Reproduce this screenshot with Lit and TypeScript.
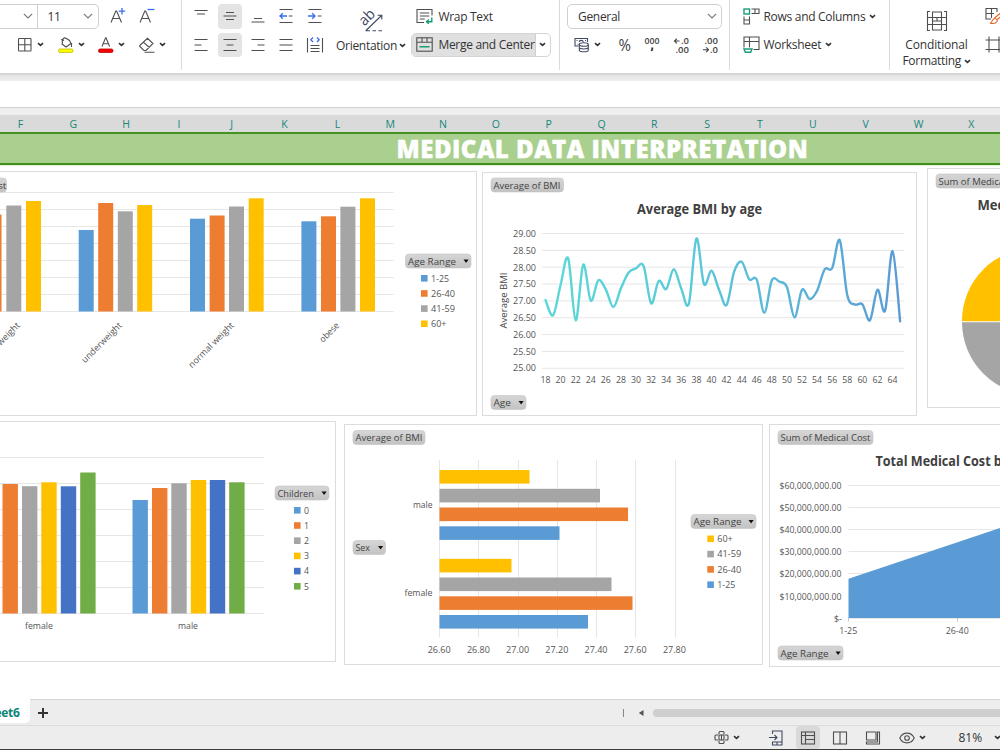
import { html, svg, css, LitElement } from 'lit'
import { customElement } from 'lit/decorators.js'

const BLUE = '#5b9bd5'
const ORANGE = '#ed7d31'
const GRAY = '#a5a5a5'
const YELLOW = '#ffc000'
const NAVY = '#4472c4'
const GREEN = '#70ad47'

const COLUMNS = 'FGHIJKLMNOPQRSTUVWX'.split('')

const icon = (w: number, h: number, body: unknown) =>
  html`<svg class="icon" width=${w} height=${h} viewBox="0 0 ${w} ${h}">${body}</svg>`

const chevron = () => icon(7, 5, svg`<path class="bold" d="M1 1.2l2.5 2.2L6 1.2" />`)
const wideChevron = () => icon(10, 6, svg`<path class="soft" d="M.8 .8L5 5 9.200 .8" />`)

// chart primitives

const label = (x: number, y: number, text: string, width = 0, anchor = 'start', cls = 'small') =>
  width
    ? svg`<text class=${cls} x=${x} y=${y} text-anchor=${anchor} textLength=${width} lengthAdjust="spacingAndGlyphs">${text}</text>`
    : svg`<text class=${cls} x=${x} y=${y} text-anchor=${anchor}>${text}</text>`

const pivot = (x: number, y: number, w: number, text: string, textWidth: number, arrow = false) => svg`
  <rect x=${x} y=${y} width=${w} height="14" rx="3.500" fill="url(#pivot)" stroke="#c2c2c2" stroke-width=".6" />
  ${label(x + 2.5, y + 10.6, text, textWidth, 'start', 'field')}
  ${arrow ? svg`<path fill="#111" d="M${x + w - 7.5} ${y + 5.6}h5.200l-2.600 3.400z" />` : ''}
`

const hLines = (x1: number, x2: number, ys: number[]) =>
  ys.map((y) => svg`<line class="grid" x1=${x1} x2=${x2} y1=${y} y2=${y} />`)

const vLines = (y1: number, y2: number, xs: number[]) =>
  xs.map((x) => svg`<line class="grid" x1=${x} x2=${x} y1=${y1} y2=${y2} />`)

const legend = (x: number, y: number, step: number, items: [string, string, number][]) =>
  items.map(
    ([color, text, width], i) => svg`
      <rect x=${x} y=${y + i * step - 3.3} width="6.600" height="6.600" fill=${color} />
      ${label(x + 10, y + i * step + 3.3, text, width)}
    `
  )

const columns = (base: number, width: number, items: [number, number, string][]) =>
  items.map(([x, top, color]) => svg`<rect x=${x} y=${top} width=${width} height=${base - top} fill=${color} />`)

const smoothPath = (pts: number[][]) => {
  let d = `M${pts[0][0]} ${pts[0][1]}`
  for (let i = 0; i < pts.length - 1; i++) {
    const a = pts[i - 1] || pts[i]
    const b = pts[i]
    const c = pts[i + 1]
    const e = pts[i + 2] || c
    d += `C${b[0] + (c[0] - a[0]) / 6} ${b[1] + (c[1] - a[1]) / 6} ${c[0] - (e[0] - b[0]) / 6} ${c[1] - (e[1] - b[1]) / 6} ${c[0]} ${c[1]}`
  }
  return d
}

const bmiByAge = [
  300, 315.3, 285, 258.3, 320.3, 264.7, 300.7, 280.3, 289.7, 307, 288.3, 272.7, 268.3, 266, 303.3, 281, 289, 269.3,
  288.7, 303.7, 238.5, 284, 270.7, 289.7, 305, 271.7, 261.7, 279.3, 279.8, 312.7, 280.3, 281.7, 287, 317.3, 289.7, 299,
  290.7, 269.3, 268, 240.2, 295.3, 304.5, 304.3, 320.3, 289.7, 310.7, 251.3, 321.3,
]

const ageX = (age: number) => 545.5 + (age - 18) * 7.545

@customElement('pivot-chart')
export class PivotChart extends LitElement {
  static properties = { box: { attribute: false }, body: { attribute: false } }

  declare box: number[]
  declare body: unknown

  render() {
    const [x, y, w, h] = this.box
    return html`
      <svg width=${w} height=${h} viewBox="${x} ${y} ${w} ${h}">
        <defs>
          <linearGradient id="pivot" x1="0" y1="0" x2="0" y2="1">
            <stop offset="0" stop-color="#d6d6d6" />
            <stop offset="1" stop-color="#c3c3c3" />
          </linearGradient>
          <linearGradient id="line" gradientUnits="userSpaceOnUse" x1="545" y1="0" x2="900" y2="0">
            <stop offset="0" stop-color="#5ad8d6" />
            <stop offset=".4" stop-color="#5acbd8" />
            <stop offset="1" stop-color="#5b9bd5" />
          </linearGradient>
        </defs>
        <rect x=${x + 0.5} y=${y + 0.5} width=${w - 1} height=${h - 1} fill="#fff" stroke="#dcdcdc" />
        ${this.body}
      </svg>
    `
  }

  static styles = css`
    :host {
      display: block;
      flex: none;
      letter-spacing: 0;
    }

    svg {
      display: block;
      font-family: 'Open Sans', 'Noto Sans', sans-serif;
    }

    .small {
      font-size: 9px;
      fill: #555;
    }

    .field {
      font-size: 9.8px;
      fill: #444;
    }

    .title {
      font-size: 13.3px;
      font-weight: 700;
      fill: #404040;
    }

    .grid {
      stroke: #e6e6e6;
      stroke-width: 1;
    }
  `
}

@customElement('app-root')
export class App extends LitElement {
  private ranges: [string, string, number][] = [
    [BLUE, '1-25', 18],
    [ORANGE, '26-40', 24],
    [GRAY, '41-59', 24],
    [YELLOW, '60+', 15.5],
  ]

  private renderWeightChart() {
    const slanted = (x: number, text: string, width: number) =>
      svg`<g transform="translate(${x} 326) rotate(-45)">${label(0, 0, text, width, 'end')}</g>`
    return svg`
      ${hLines(-5, 393.5, [192.5, 209.5, 226.5, 243.5, 260.5, 277.5, 294.5, 311.5])}
      ${columns(311.5, 15, [
        [-13.5, 214.5, ORANGE],
        [6.3, 205.5, GRAY],
        [26, 201, YELLOW],
        [78.7, 230, BLUE],
        [98.2, 203, ORANGE],
        [117.8, 211.3, GRAY],
        [137.2, 205, YELLOW],
        [190, 218.7, BLUE],
        [209.6, 215.5, ORANGE],
        [229, 206.5, GRAY],
        [248.7, 198.3, YELLOW],
        [301.4, 221.3, BLUE],
        [321, 216.3, ORANGE],
        [340.4, 206.7, GRAY],
        [360, 198.3, YELLOW],
      ])}
      ${slanted(20.5, 'overweight', 47)}
      ${slanted(122.5, 'underweight', 53)}
      ${slanted(234.5, 'normal weight', 60)}
      ${slanted(340, 'obese', 24)}
      ${pivot(-70, 178, 76.5, 'Average of Cost', 74)}
      ${pivot(405.5, 254, 65.5, 'Age Range', 48, true)}
      ${legend(421, 278.3, 15.15, this.ranges)}
    `
  }

  private renderLineChart() {
    const ticks = ['29.00', '28.50', '28.00', '27.50', '27.00', '26.50', '26.00', '25.50', '25.00']
    const ages = Array.from({ length: 24 }, (_, i) => 18 + i * 2)
    return svg`
      ${pivot(491, 178, 72.5, 'Average of BMI', 67)}
      ${label(699.5, 214, 'Average BMI by age', 125, 'middle', 'title')}
      ${hLines(542, 904, ticks.map((_, i) => 233.5 + i * 16.85))}
      ${ticks.map((t, i) => label(536, 237 + i * 16.8, t, 23, 'end'))}
      ${ages.map((a) => label(ageX(a), 383.3, String(a), 10, 'middle'))}
      <g transform="translate(507 328.500) rotate(-90)">${label(0, 0, 'Average BMI', 56, 'start', 'field')}</g>
      <path d=${smoothPath(bmiByAge.map((y, i) => [ageX(18 + i), y]))} fill="none" stroke="url(#line)"
        stroke-width="2.400" stroke-linecap="round" stroke-linejoin="round" />
      ${pivot(491, 395.5, 35, 'Age', 17.5, true)}
    `
  }

  private renderPieChart() {
    return svg`
      ${pivot(936, 174, 95, 'Sum of Medical Cost', 90)}
      ${label(977.5, 209.5, 'Medical Cost by Region', 150, 'start', 'title')}
      <path fill=${YELLOW} d="M1035 321.300H962A73 73 0 0 1 1035 248z" />
      <path fill=${GRAY} d="M1035 322.300H962A73 73 0 0 0 1035 395z" />
    `
  }

  private renderChildrenChart() {
    return svg`
      ${hLines(-5, 264, [457.5, 483.5, 509.5, 535.5, 561.5, 587.5, 613.5])}
      ${columns(613.5, 15.4, [
        [2.5, 484, ORANGE],
        [22, 486.2, GRAY],
        [41.3, 482.3, YELLOW],
        [60.8, 486.3, NAVY],
        [80.2, 472.5, GREEN],
        [132.5, 500, BLUE],
        [152, 488, ORANGE],
        [171.3, 483.3, GRAY],
        [190.8, 480, YELLOW],
        [209.8, 480, NAVY],
        [229.2, 482.3, GREEN],
      ])}
      ${label(39, 628.8, 'female', 28, 'middle')}
      ${label(188, 628.8, 'male', 20, 'middle')}
      ${pivot(275, 486, 54, 'Children', 36.5, true)}
      ${legend(294, 510.3, 15.2, [
        [BLUE, '0', 5],
        [ORANGE, '1', 5],
        [GRAY, '2', 5],
        [YELLOW, '3', 5],
        [NAVY, '4', 5],
        [GREEN, '5', 5],
      ])}
    `
  }

  private renderSexChart() {
    const ticks = ['26.60', '26.80', '27.00', '27.20', '27.40', '27.60', '27.80']
    const bars: [number, number, string][] = [
      [470, 529.5, YELLOW],
      [488.8, 600, GRAY],
      [507.5, 628, ORANGE],
      [526.3, 559.5, BLUE],
      [558.8, 511.5, YELLOW],
      [577.5, 611.5, GRAY],
      [596.3, 632.5, ORANGE],
      [615, 588, BLUE],
    ]
    return svg`
      ${vLines(460, 637.5, [439.5, 478.5, 518.5, 557.5, 596.5, 635.5, 675.5])}
      ${bars.map(([y, end, color]) => svg`<rect x="439.500" y=${y} width=${end - 439.5} height="13.600" fill=${color} />`)}
      ${label(432.5, 507.5, 'male', 19.5, 'end')}
      ${label(432.5, 596.3, 'female', 28, 'end')}
      ${ticks.map((t, i) => label(439.2 + i * 39.2, 653.3, t, 23, 'middle'))}
      ${pivot(353, 430.5, 72, 'Average of BMI', 67)}
      ${pivot(353, 540.5, 32.5, 'Sex', 14.5, true)}
      ${pivot(691, 514.5, 65, 'Age Range', 48, true)}
      ${legend(707.3, 538.8, 15.3, [...this.ranges].reverse())}
    `
  }

  private renderAreaChart() {
    const ticks = ['$60,000,000.00', '$50,000,000.00', '$40,000,000.00', '$30,000,000.00', '$20,000,000.00', '$10,000,000.00']
    return svg`
      ${pivot(778, 430.5, 95, 'Sum of Medical Cost', 90)}
      ${label(875.5, 466, 'Total Medical Cost by Age', 160, 'start', 'title')}
      ${hLines(848.5, 1005, [485.5, 507.5, 529.5, 551.5, 573.5, 595.5, 618.5])}
      ${ticks.map((t, i) => label(841.5, 489 + i * 22.1, t, 62, 'end'))}
      ${label(842, 621.5, '$-', 8, 'end')}
      <path fill=${BLUE} d="M848.500 578.700L1003 527V618H848.500z" />
      ${[848.5, 957.5].map((x) => svg`<line x1=${x} x2=${x} y1="618" y2="621.500" stroke="#c8c8c8" />`)}
      ${label(848.2, 633.5, '1-25', 18, 'middle')}
      ${label(957.2, 633.5, '26-40', 23, 'middle')}
      ${pivot(778, 646, 65, 'Age Range', 48, true)}
    `
  }

  private renderFontGroup() {
    return html`
      <section class="group font-group">
        <div class="row">
          <div class="family">${wideChevron()}</div>
          <div class="size"><span>11</span>${wideChevron()}</div>
          <span class="slot first-slot">
            ${icon(18, 18, svg`<path d="M2 15.500L6.800 4h.8L12.500 15.500M3.800 11.500h7" /><path class="blue" d="M13 1v6.500M9.800 4.200h6.400" />`)}
          </span>
          <span class="slot">
            ${icon(18, 18, svg`<path d="M2 15.500L6.800 4h.8L12.500 15.500M3.800 11.500h7" /><path class="blue" d="M9.500 2.500h6.800" />`)}
          </span>
        </div>
        <div class="row tools">
          <span class="tool">
            ${icon(16, 16, svg`<rect x="1.500" y="1.500" width="12.500" height="12.500" rx=".8" /><path d="M7.800 1.500v12.500M1.500 7.800h12.500" />`)} ${chevron()}
          </span>
          <span class="tool">
            ${icon(
              16,
              16,
              svg`<path d="M4.500 5.500C3.500 3 6 0 8 1.200L11.500 3.500 13 6.500 8 10 4 7zM3 2.500l3 1M13.500 6v4" />
                <rect x=".5" y="12" width="14.500" height="3.400" rx="1.500" fill="#ff0" stroke="#b9b900" stroke-width=".8" />`
            )}
            ${chevron()}
          </span>
          <span class="tool">
            ${icon(
              16,
              16,
              svg`<path d="M4 9.500L7.600 .8h.4L11.600 9.500M5.300 6.800h5" />
                <rect x=".5" y="12" width="14.500" height="3.400" rx="1.500" fill="#f00" stroke="#b00000" stroke-width=".8" />`
            )}
            ${chevron()}
          </span>
          <span class="tool">
            ${icon(16, 16, svg`<path d="M.8 8.500L8.500 1.300 14 6.500 7 13.500H5L.8 9.500zM4.500 5.300l6 5.200M5.500 15.200h10" />`)} ${chevron()}
          </span>
        </div>
      </section>
    `
  }

  private renderAlignGroup() {
    return html`
      <section class="group align-group">
        <div class="stack">
          <div class="row slots">
            <span class="slot">${icon(16, 16, svg`<path d="M1.500 2.500h13M4 6h8" />`)}</span>
            <span class="slot on">${icon(16, 16, svg`<path d="M4 4.500h8M1.500 8h13M4 11.500h8" />`)}</span>
            <span class="slot">${icon(16, 16, svg`<path d="M4 10.500h8M1.500 14h13" />`)}</span>
            <span class="slot">
              ${icon(16, 16, svg`<path d="M1.500 1.500h13M10.800 8h3.700M1.500 14.500h13" /><path class="blue" d="M9 8H2M4.800 5.200L2 8l2.800 2.800" />`)}
            </span>
            <span class="slot">
              ${icon(16, 16, svg`<path d="M1.500 1.500h13M10.800 8h3.700M1.500 14.500h13" /><path class="blue" d="M1 8h7M5.200 5.200L8 8l-2.800 2.800" />`)}
            </span>
          </div>
          <div class="row slots">
            <span class="slot">${icon(16, 16, svg`<path d="M1.500 2.500h13M1.500 8h7M1.500 13.500h13" />`)}</span>
            <span class="slot on">${icon(16, 16, svg`<path d="M1.500 2.500h13M4.500 8h7M1.500 13.500h13" />`)}</span>
            <span class="slot">${icon(16, 16, svg`<path d="M1.500 2.500h13M7.500 8h7M1.500 13.500h13" />`)}</span>
            <span class="slot">${icon(16, 16, svg`<path d="M1.500 2.500h13M1.500 8h13M1.500 13.500h13" />`)}</span>
            <span class="slot">
              ${icon(
                18,
                18,
                svg`<path d="M1.500 2v14.500M16.500 2v14.500M4.500 9.500h9M4.500 12.500h9M4.500 15.500h9" />
                  <path class="blue" d="M7 1.500L4.800 3.800 7 6M11 1.500L13.200 3.800 11 6" />`
              )}
            </span>
          </div>
        </div>
        <div class="orientation">
          ${icon(
            32,
            24,
            svg`<g transform="translate(9.500 18.500) rotate(-45)"><text class="glyph ab" textLength="16.500" lengthAdjust="spacingAndGlyphs">ab</text></g>
              <path class="ink" d="M11 22.500L26.500 7.500M22.500 7.200H26.800V11.500M10.500 22.800h4.500M17.500 22.800h3.500M23.500 22.800h3.500" />`
          )}
          <span class="caption">Orientation ${chevron()}</span>
        </div>
        <div class="stack wrap-stack">
          <div class="row wrap">
            ${icon(
              17,
              16,
              svg`<path d="M8 14.500H1V1.500h15v6M3.800 5h9.500M3.800 8h9.500M3.800 11h5" />
                <path class="teal" d="M15.800 9.500v4.300H10.800M12.800 11.500L10.500 13.800l2.300 2" />`
            )}
            <span>Wrap Text</span>
          </div>
          <div class="merge">
            <span class="merge-main">
              ${icon(
                17,
                15,
                svg`<rect x=".800" y=".8" width="15.400" height="13.400" /><path d="M.8 5.300h15.400M6 .800v4.500M11 .800v4.500" /><path class="teal" d="M3.500 9.800h10" />`
              )}
              <span>Merge and Center</span>
            </span>
            <span class="merge-more">${chevron()}</span>
          </div>
        </div>
      </section>
    `
  }

  private renderNumberGroup() {
    return html`
      <section class="group number-group">
        <div class="format"><span>General</span>${wideChevron()}</div>
        <div class="row number-row">
          <span class="money">
            ${icon(
              16,
              16,
              svg`<path class="ink" d="M4.500 9H1V1.500h12.500V5M2.500 3.500h1M11 3.500h1M3.500 7.300h1" /><path class="ink" d="M5.200 5a2 1.600 0 0 1 4 0" />
                <ellipse class="ink" cx="9.800" cy="7.500" rx="4.500" ry="1.800" />
                <path class="ink" d="M5.300 7.500v5.500c0 2.400 9 2.400 9 0V7.500M5.300 10.300c0 2.200 9 2.200 9 0" />`
            )}
            ${chevron()}
          </span>
          ${icon(14, 18, svg`<text class="glyph percent" x=".5" y="15" textLength="12.500" lengthAdjust="spacingAndGlyphs">%</text>`)}
          ${icon(
            16,
            18,
            svg`<text class="glyph" x=".5" y="8" textLength="15" lengthAdjust="spacingAndGlyphs">000</text><path class="comma" d="M8.300 11.500v1.500l-.8 2" />`
          )}
          ${icon(
            17,
            18,
            svg`<path class="arrow" d="M6.500 5H1.500M3.800 2.700L1.500 5l2.300 2.300" />
              <text class="glyph" x="8" y="8" textLength="8" lengthAdjust="spacingAndGlyphs">.0</text>
              <text class="glyph" x="2.500" y="16.700" textLength="13.500" lengthAdjust="spacingAndGlyphs">.00</text>`
          )}
          ${icon(
            17,
            18,
            svg`<text class="glyph" x="2.500" y="8" textLength="13.500" lengthAdjust="spacingAndGlyphs">.00</text>
              <path class="arrow" d="M1 13.700h5.500M4.200 11.400l2.300 2.300-2.300 2.300" />
              <text class="glyph" x="8" y="16.700" textLength="8" lengthAdjust="spacingAndGlyphs">.0</text>`
          )}
        </div>
      </section>
    `
  }

  private renderCellsGroup() {
    return html`
      <section class="group cells-group">
        <div class="row entry">
          ${icon(
            17,
            17,
            svg`<path d="M8.500 1h7.500v4.500H8.500M12 1v4.500M1 8.500V16h5.500V8.500M1 12h5.500" /><rect class="teal" x="1" y="1" width="5.500" height="5" />`
          )}
          <span>Rows and Columns</span>${chevron()}
        </div>
        <div class="row entry sheet-entry">
          ${icon(
            17,
            17,
            svg`<path d="M1 11.500V1h15v12.500H10.500M1 5.500h15M6.500 1v10.500" /><path class="teal" d="M1 13h8l-1.300 3.200H2.300z" />`
          )}
          <span>Worksheet</span>${chevron()}
        </div>
      </section>
    `
  }

  private renderStyleGroup() {
    return html`
      <section class="group style-group">
        <div class="conditional">
          ${icon(
            22,
            22,
            svg`<path d="M4 1.500H1.500v19H4M18 1.500h2.500v19H18M1.500 7.500h19M1.500 14.500h19M6.500 2h9v5.500h-9zM6.500 11h9M11 7.500v3.500M6.500 14.500h9V20h-9zM6.500 7.500v7M15.500 7.500v7" />`
          )}
          <span>Conditional</span>
          <span class="caption">Formatting ${chevron()}</span>
        </div>
        <div class="clipped">
          ${icon(
            18,
            18,
            svg`<path d="M6 12H1V1.500h11V5M1 6.500h8M6.500 1.500V11" /><path class="orange" d="M18 4L9.500 11M5 16.200c3-.5 1.500-4 4.500-4.700 2.500 0 3.500 2 2 3.700-1.600 1.600-4.300 1.500-6.500 1zM18 7.500l-5.500 5" />`
          )}
          ${icon(18, 18, svg`<path d="M4 .5v16M14 .5v16M.5 4H18M.5 13.500H18" />`)}
        </div>
      </section>
    `
  }

  private chart(box: number[], body: unknown, cls: string) {
    return html`<pivot-chart class=${cls} .box=${box} .body=${body}></pivot-chart>`
  }

  render() {
    return html`
      <header class="ribbon">
        ${this.renderFontGroup()} ${this.renderAlignGroup()} ${this.renderNumberGroup()} ${this.renderCellsGroup()}
        ${this.renderStyleGroup()}
      </header>
      <div class="shade"></div>
      <div class="formula"></div>
      <div class="gap"></div>
      <div class="letters">${COLUMNS.map((c) => html`<span>${c}</span>`)}</div>
      <h1 class="banner"><span>MEDICAL DATA INTERPRETATION</span></h1>
      <main class="sheet">
        <div class="charts">
          ${this.chart([-10, 171, 487, 245], this.renderWeightChart(), 'weight')}
          ${this.chart([482, 172, 435, 244], this.renderLineChart(), 'line')}
          ${this.chart([927, 168, 150, 240], this.renderPieChart(), 'pie')}
        </div>
        <div class="charts lower">
          ${this.chart([-10, 421, 346, 241], this.renderChildrenChart(), 'children')}
          ${this.chart([344, 424, 419, 241], this.renderSexChart(), 'sex')}
          ${this.chart([769, 424, 300, 243], this.renderAreaChart(), 'area')}
        </div>
      </main>
      <nav class="tabs">
        <span class="tab">Sheet6</span>
        ${icon(12, 12, svg`<path class="plus" d="M6 1v10M1 6h10" />`)}
        <span class="spacer"></span>
        <span class="split"></span>
        ${icon(6, 8, svg`<path d="M5.500 1v6L.8 4z" fill="#555" stroke="none" />`)}
        <span class="thumb"></span>
      </nav>
      <footer class="status">
        <span class="view move">
          ${icon(
            15,
            15,
            svg`<path d="M5 4V2.500Q5 1.500 6 1.500h3q1 0 1 1V4M5 11v1.500q0 1 1 1h3q1 0 1-1V11M4 5H2Q1 5 1 6v3q0 1 1 1h2M11 5h2q1 0 1 1v3q0 1-1 1h-2" /><rect x="5" y="5" width="5" height="5" /><path d="M7.500 5v5" />`
          )}
          ${chevron()}
        </span>
        <span class="divider"></span>
        <span class="view jump">
          ${icon(16, 16, svg`<path class="ink" d="M4.500 4V1h9.500v14H4.500v-3.500M1 7.500h8M6.500 5L9 7.500 6.500 10M4.500 12H14M9 12v3" />`)}
        </span>
        <span class="view active">${icon(16, 16, svg`<rect x="1.500" y="2" width="13" height="12" /><path d="M1.500 5.500h13M5.500 2v12M5.500 9.500h9" />`)}</span>
        <span class="view">${icon(16, 16, svg`<rect x="1.500" y="2" width="13" height="12" /><path d="M8 2v12" />`)}</span>
        <span class="view">${icon(16, 16, svg`<path d="M1.500 2h9.500v8H1.500zM12.500 2h2v12H1.500v-2h11z" />`)}</span>
        <span class="view eye">
          ${icon(16, 14, svg`<path d="M.8 7c3-6.500 11.400-6.500 14.400 0-3 6.500-11.400 6.500-14.400 0z" /><circle cx="8" cy="7" r="2.300" />`)} ${chevron()}
        </span>
        <span class="divider"></span>
        <span class="zoom">81%</span>
        ${chevron()}
      </footer>
    `
  }

  static styles = css`
    :host {
      display: flex;
      flex-direction: column;
      width: 1000px;
      height: 750px;
      overflow: hidden;
      background: #fff;
      color: #333;
      font-family: 'Open Sans', 'Noto Sans', sans-serif;
      font-size: 12px;
      letter-spacing: -0.3px;
    }

    * {
      box-sizing: border-box;
    }

    :host > * {
      flex: none;
    }

    span {
      white-space: nowrap;
    }

    .icon {
      display: block;
      flex: none;
      fill: none;
      stroke: #4f4f4f;
      stroke-width: 1.1;
    }

    .icon .bold {
      stroke: #333;
      stroke-width: 1.6;
    }

    .icon .soft {
      stroke: #777;
    }

    .icon .blue {
      stroke: #3a6cf0;
      stroke-width: 1.3;
    }

    .icon .teal {
      stroke: #1a9c77;
      stroke-width: 1.4;
    }

    .icon .orange {
      stroke: #e0662c;
    }

    .icon .ink {
      stroke: #414a63;
    }

    .icon .arrow {
      stroke: #444;
    }

    .icon .comma {
      stroke: #333;
      stroke-width: 1.8;
    }

    .icon .plus {
      stroke: #333;
      stroke-width: 2;
    }

    .glyph {
      fill: #444;
      stroke: none;
      font-size: 8.4px;
      font-weight: 600;
      letter-spacing: 0;
    }

    .percent {
      font-size: 16px;
      font-weight: 400;
    }

    .ab {
      fill: #414a63;
      font-size: 15px;
      font-weight: 400;
    }

    .ribbon {
      display: flex;
      height: 73px;
      background: #fff;
    }

    .group {
      display: flex;
      flex: none;
      height: 70px;
      padding-top: 4px;
      border-right: 1px solid #dadada;
    }

    .row {
      display: flex;
      align-items: center;
      height: 24.5px;
    }

    .stack,
    .font-group,
    .number-group,
    .cells-group {
      display: flex;
      flex-direction: column;
      gap: 4px;
    }

    .slot {
      display: flex;
      align-items: center;
      justify-content: center;
      width: 24px;
      height: 24.5px;
      border-radius: 4px;
    }

    .on {
      background: #e4e4e4;
    }

    .slots {
      gap: 4.4px;
    }

    .font-group {
      width: 182px;
    }

    .font-group .row:first-child {
      gap: 4.5px;
    }

    .family,
    .size {
      display: flex;
      align-items: center;
      height: 24.5px;
      border: 1px solid #cfcfcf;
      border-left: none;
    }

    .family {
      width: 38px;
      padding-left: 22.5px;
    }

    .size {
      justify-content: space-between;
      width: 61px;
      margin-left: -4.5px;
      padding: 0 5px 0 9.5px;
      border-radius: 0 5px 5px 0;
    }

    .first-slot {
      margin-left: 2.5px;
    }

    .tools {
      padding-left: 17px;
    }

    .tool {
      display: flex;
      align-items: center;
      gap: 4px;
      width: 40.7px;
    }

    .align-group {
      width: 378px;
      padding-left: 7.2px;
    }

    .orientation {
      display: flex;
      flex-direction: column;
      align-items: center;
      width: 71px;
      margin-left: 9px;
      padding-top: 4px;
      gap: 5px;
    }

    .caption {
      display: flex;
      align-items: center;
      gap: 2.5px;
    }

    .wrap-stack {
      margin-left: 4.2px;
    }

    .wrap {
      gap: 5px;
      padding-left: 5.5px;
    }

    .merge {
      display: flex;
      height: 24.5px;
      width: 140px;
      border: 1px solid #d4d4d4;
      border-radius: 5px;
      overflow: hidden;
    }

    .merge-main {
      display: flex;
      align-items: center;
      gap: 5px;
      width: 124px;
      padding-left: 4.5px;
      background: #e0e0e0;
      border-right: 1px solid #d0d0d0;
    }

    .merge-more {
      display: flex;
      align-items: center;
      padding-left: 3px;
    }

    .number-group {
      width: 170px;
      padding-left: 7px;
    }

    .format {
      display: flex;
      align-items: center;
      justify-content: space-between;
      width: 155px;
      height: 24.5px;
      padding: 0 4px 0 10px;
      border: 1px solid #cfcfcf;
      border-radius: 5px;
    }

    .number-row {
      gap: 12.5px;
      padding-left: 7px;
    }

    .money {
      display: flex;
      align-items: center;
      gap: 3.5px;
      width: 31px;
    }

    .cells-group {
      width: 160px;
      padding-left: 12.5px;
    }

    .entry {
      gap: 4px;
    }

    .style-group {
      flex: 1;
      border-right: none;
      padding-left: 13.5px;
      overflow: hidden;
    }

    .conditional {
      display: flex;
      flex-direction: column;
      align-items: center;
      width: 66px;
      padding-top: 6px;
      line-height: 16px;
      flex: none;
    }

    .conditional > .icon {
      margin-bottom: 5px;
    }

    .conditional > span:first-of-type {
      letter-spacing: -0.15px;
    }

    .clipped {
      display: flex;
      flex-direction: column;
      gap: 11px;
      padding: 3px 0 0 15px;
    }

    .shade {
      height: 8px;
      background: linear-gradient(#cfcfcf, #e6e6e6 40%, #efefef);
    }

    .formula {
      height: 27px;
      background: #fff;
      border-bottom: 1px solid #d0d0d0;
    }

    .gap {
      height: 7px;
      background: #efefef;
    }

    .letters {
      display: flex;
      height: 17px;
      margin-left: -12px;
      background: #dadada;
      border-left: 6px solid #dadada;
    }

    .letters span {
      flex: none;
      width: calc(951px / 18);
      color: #14877a;
      font-size: 10.5px;
      letter-spacing: 0;
      line-height: 18px;
      text-align: center;
    }

    .banner {
      display: flex;
      align-items: center;
      height: 33px;
      margin: 0;
      padding-left: 396.5px;
      background: #a9d08e;
      border-top: 2px solid #459122;
      border-bottom: 2px solid #3f8f1a;
      color: #fff;
      font-size: 24px;
      font-weight: 800;
      letter-spacing: 0.5px;
      line-height: 29px;
      -webkit-text-stroke: 0.4px #fff;
    }

    .sheet {
      height: 534px;
      border-top: 1px solid #e3f0d9;
    }

    .charts {
      display: flex;
      align-items: flex-start;
      height: 252px;
      margin-left: -10px;
    }

    .weight {
      margin-top: 5px;
    }

    .line {
      margin: 6px 10px 0 5px;
    }

    .pie {
      margin-top: 2px;
    }

    .children {
      margin-top: 3px;
    }

    .sex {
      margin: 6px 6px 0 8px;
    }

    .area {
      margin-top: 6px;
    }

    .tabs {
      display: flex;
      align-items: center;
      height: 26px;
      background: #ededed;
      border-top: 1px solid #d6d6d6;
    }

    .tab {
      display: flex;
      align-items: center;
      justify-content: flex-end;
      align-self: flex-start;
      width: 30px;
      height: 24px;
      margin: -1px 6.5px 0 0;
      padding: 2px 10.5px 0 0;
      background: #fff;
      border-radius: 0 0 5px 0;
      color: #0e8577;
      font-weight: 700;
    }

    .spacer {
      flex: 1;
    }

    .split {
      width: 1px;
      height: 8px;
      margin-right: 14px;
      background: #888;
    }

    .thumb {
      width: 347px;
      height: 8px;
      margin-left: 9px;
      background: #cfcfcf;
      border-radius: 4px 0 0 4px;
    }

    .status {
      display: flex;
      align-items: center;
      height: 25px;
      padding-left: 713px;
      background: #ededed;
      border-top: 1px solid #dcdcdc;
      border-bottom: 1px solid #3c3c3c;
    }

    .view {
      display: flex;
      align-items: center;
      justify-content: center;
      flex: none;
      width: 24px;
      height: 23px;
      margin-right: 8.5px;
      border-radius: 4px;
    }

    .move {
      gap: 4px;
      width: 27px;
      margin-right: 14px;
    }

    .divider {
      width: 1px;
      height: 14px;
      background: #d2d2d2;
    }

    .jump {
      margin: 0 8px 0 9.5px;
    }

    .active {
      background: #d9d9d9;
    }

    .eye {
      gap: 4px;
      width: 28px;
      margin: 0 14px 0 5px;
    }

    .zoom {
      margin: 0 12px 0 18.5px;
      letter-spacing: 0;
    }
  `
}

export default App

declare global {
  interface HTMLElementTagNameMap {
    'app-root': App
    'pivot-chart': PivotChart
  }
}
